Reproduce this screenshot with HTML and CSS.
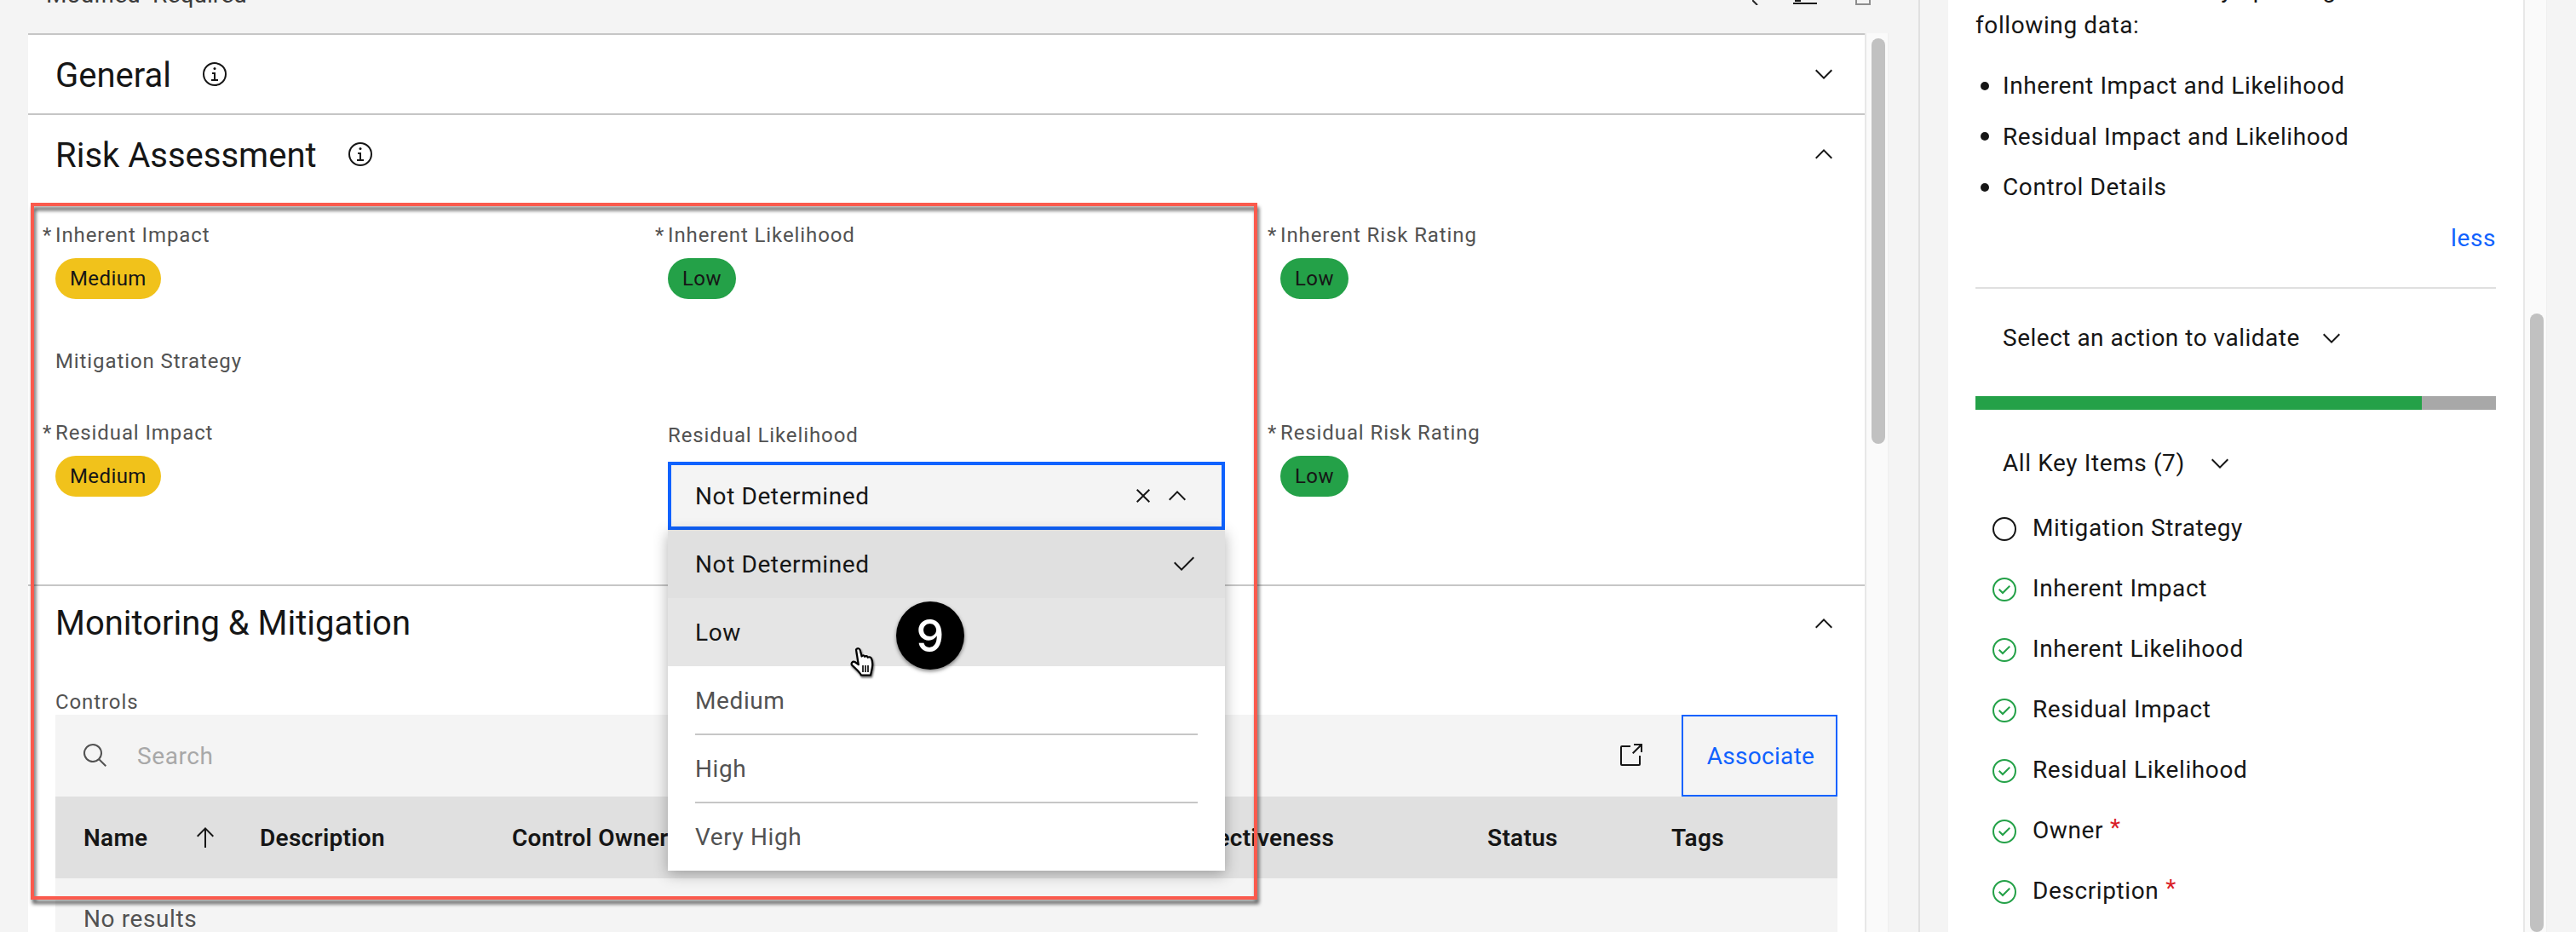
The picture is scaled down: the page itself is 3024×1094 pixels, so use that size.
FILE: index.html
```html
<!DOCTYPE html>
<html lang="en">
<head>
  <meta charset="UTF-8" />
  <title>Risk Assessment</title>
  <link rel="stylesheet" href="styles.css">
</head>
<body>
  <svg class="icon-defs" xmlns="http://www.w3.org/2000/svg">
    <symbol id="i-info" viewBox="0 0 32 32"><path d="M17 22V14H13V16H15V22H12V24H20V22Z"/><path d="M16 8a1.5 1.5 0 1 0 1.5 1.5A1.5 1.5 0 0 0 16 8Z"/><path d="M16 30A14 14 0 1 1 30 16 14 14 0 0 1 16 30ZM16 4A12 12 0 1 0 28 16 12 12 0 0 0 16 4Z"/></symbol>
    <symbol id="i-down" viewBox="0 0 32 32"><path d="M16 22L6 12 7.4 10.6 16 19.2 24.6 10.6 26 12z"/></symbol>
    <symbol id="i-up" viewBox="0 0 32 32"><path d="M16 10L26 20 24.6 21.4 16 12.8 7.4 21.4 6 20z"/></symbol>
    <symbol id="i-close" viewBox="0 0 32 32"><path d="M24 9.4L22.6 8 16 14.6 9.4 8 8 9.4 14.6 16 8 22.6 9.4 24 16 17.4 22.6 24 24 22.6 17.4 16 24 9.4z"/></symbol>
    <symbol id="i-check" viewBox="0 0 32 32"><path d="M13 24L4 15 5.414 13.586 13 21.171 26.586 7.586 28 9 13 24z"/></symbol>
    <symbol id="i-search" viewBox="0 0 32 32"><path d="M29 27.586l-7.552-7.552a11.018 11.018 0 1 0-1.414 1.414L27.586 29ZM4 13a9 9 0 1 1 9 9A9.01 9.01 0 0 1 4 13Z"/></symbol>
    <symbol id="i-launch" viewBox="0 0 32 32"><path d="M26 28H6a2 2 0 0 1-2-2V6A2 2 0 0 1 6 4H16V6H6V26H26V16h2V26A2 2 0 0 1 26 28Z"/><path d="M20 2V4H26.586L18 12.586 19.414 14 28 5.414V12H30V2Z"/></symbol>
    <symbol id="i-arrow" viewBox="0 0 32 32"><path d="M16 4L6 14 7.41 15.41 15 7.83V28H17V7.83L24.59 15.41 26 14 16 4z"/></symbol>
    <symbol id="i-ok" viewBox="0 0 32 32"><path d="M14 21.414L9 16.413 10.413 15 14 18.586 21.585 11 23 12.415Z"/><path d="M16 2A14 14 0 1 0 30 16 14 14 0 0 0 16 2Zm0 26A12 12 0 1 1 28 16 12 12 0 0 1 16 28Z"/></symbol>
    <symbol id="i-todo" viewBox="0 0 32 32"><path d="M16 2A14 14 0 1 0 30 16 14 14 0 0 0 16 2Zm0 26A12 12 0 1 1 28 16 12 12 0 0 1 16 28Z"/></symbol>
  </svg>

  <div class="main">
    <div class="top-bar">
      <span class="legend">Modified &nbsp;Required</span>
      <svg class="top-icon tail" viewBox="0 0 8 6"><path d="M0 0L6 6" /></svg>
      <svg class="top-icon base" viewBox="0 0 28 6"><path d="M2 1H9M0 4H28" /></svg>
      <svg class="top-icon box" viewBox="0 0 18 6"><path d="M1 0V5H17V0" /></svg>
    </div>

    <div class="work">
      <div class="panel">
        <section class="section">
          <div class="section-head">
            <h2 class="section-title">General</h2>
            <svg class="icon info"><use href="#i-info"/></svg>
            <svg class="icon toggle"><use href="#i-down"/></svg>
          </div>
        </section>

        <section class="section">
          <div class="section-head">
            <h2 class="section-title">Risk Assessment</h2>
            <svg class="icon info"><use href="#i-info"/></svg>
            <svg class="icon toggle"><use href="#i-up"/></svg>
          </div>
          <div class="fields">
            <div class="field">
              <label class="field-label req">Inherent Impact</label>
              <span class="pill pill-medium">Medium</span>
            </div>
            <div class="field">
              <label class="field-label req">Inherent Likelihood</label>
              <span class="pill pill-low">Low</span>
            </div>
            <div class="field">
              <label class="field-label req">Inherent Risk Rating</label>
              <span class="pill pill-low">Low</span>
            </div>

            <div class="field field-wide">
              <label class="field-label">Mitigation Strategy</label>
            </div>

            <div class="field">
              <label class="field-label req">Residual Impact</label>
              <span class="pill pill-medium">Medium</span>
            </div>
            <div class="field field-select">
              <label class="field-label">Residual Likelihood</label>
              <div class="select">
                <div class="select-box">
                  <span class="select-value">Not Determined</span>
                  <svg class="icon"><use href="#i-close"/></svg>
                  <svg class="icon"><use href="#i-up"/></svg>
                </div>
                <ul class="menu">
                  <li class="menu-item selected">Not Determined <svg class="icon"><use href="#i-check"/></svg></li>
                  <li class="menu-item hovered">Low</li>
                  <li class="menu-item">Medium</li>
                  <li class="menu-item">High</li>
                  <li class="menu-item">Very High</li>
                </ul>
              </div>
            </div>
            <div class="field">
              <label class="field-label req">Residual Risk Rating</label>
              <span class="pill pill-low">Low</span>
            </div>
          </div>
        </section>

        <section class="section">
          <div class="section-head section-head-short">
            <h2 class="section-title">Monitoring &amp; Mitigation</h2>
            <svg class="icon toggle"><use href="#i-up"/></svg>
          </div>
          <div class="controls">
            <div class="controls-label">Controls</div>
            <div class="table-tools">
              <svg class="icon search-icon"><use href="#i-search"/></svg>
              <span class="search-text">Search</span>
              <svg class="icon launch-icon"><use href="#i-launch"/></svg>
              <button class="btn-associate">Associate</button>
            </div>
            <div class="table-head">
              <div class="th th-name">Name <svg class="icon"><use href="#i-arrow"/></svg></div>
              <div class="th">Description</div>
              <div class="th">Control Owner</div>
              <div class="th">Control Effectiveness</div>
              <div class="th">Status</div>
              <div class="th">Tags</div>
            </div>
            <div class="table-empty">No results</div>
          </div>
        </section>
      </div>
      <div class="scroll"><div class="thumb thumb-main"></div></div>
    </div>
  </div>

  <div class="side">
    <div class="side-card">
      <p class="side-text">The risk is assessed by updating the<br>following data:</p>
      <ul class="bullets">
        <li>Inherent Impact and Likelihood</li>
        <li>Residual Impact and Likelihood</li>
        <li>Control Details</li>
      </ul>
      <a class="less">less</a>
      <hr class="side-rule">
      <div class="picker picker-action">Select an action to validate <svg class="icon"><use href="#i-down"/></svg></div>
      <div class="progress"><div class="progress-done" style="width: 85.8%"></div></div>
      <div class="picker picker-items">All Key Items (7) <svg class="icon"><use href="#i-down"/></svg></div>
      <ul class="checklist">
        <li><svg class="icon"><use href="#i-todo"/></svg>Mitigation Strategy</li>
        <li><svg class="icon done"><use href="#i-ok"/></svg>Inherent Impact</li>
        <li><svg class="icon done"><use href="#i-ok"/></svg>Inherent Likelihood</li>
        <li><svg class="icon done"><use href="#i-ok"/></svg>Residual Impact</li>
        <li><svg class="icon done"><use href="#i-ok"/></svg>Residual Likelihood</li>
        <li><svg class="icon done"><use href="#i-ok"/></svg>Owner <span class="star">*</span></li>
        <li><svg class="icon done"><use href="#i-ok"/></svg>Description <span class="star">*</span></li>
      </ul>
    </div>
    <div class="scroll scroll-side"><div class="thumb thumb-side"></div></div>
  </div>

  <!-- annotation layer -->
  <div class="callout"></div>
  <div class="step-badge">9</div>
  <svg class="hand" viewBox="0 0 30 34">
    <path d="M7 2.5C8.5.5 11 1 11.6 3L13.6 10.5C14.6 8.8 16.6 9 17.2 10.8 18.2 9.6 20.2 10 20.7 11.8 21.8 10.8 24.2 11.2 25 13 26.2 16 26.6 20.5 25.6 25L24 32.5H13C11 28.5 6 24.5 2 20.5.8 18.5 3 15.5 5.5 17L9.8 20.2Z" fill="#fff" stroke="#000" stroke-width="2.2" stroke-linejoin="round"/>
    <path d="M15 21V29M18 21V29M21 21V29" stroke="#000" stroke-width="1.6"/>
  </svg>
</body>
</html>
```

FILE: styles.css
```css
* { box-sizing: border-box; }

body {
  margin: 0;
  width: 3024px;
  height: 1094px;
  overflow: hidden;
  display: flex;
  background: #f4f4f4;
  color: #161616;
  font-family: Roboto, "Noto Sans", sans-serif;
  font-size: 28px;
  letter-spacing: .6px;
}

.icon-defs { width: 0; height: 0; position: absolute; }
.icon { width: 32px; height: 32px; flex: none; fill: #161616; }

/* main column */
.main { width: 2254px; height: 1094px; padding-left: 33px; border-right: 2px solid #e0e0e0; }

.top-bar { height: 39px; display: flex; align-items: flex-start; padding-left: 21px; }
.legend { margin-top: -24px; line-height: 36px; letter-spacing: .1px; color: #393939; }
.top-icon { height: 6px; fill: none; }
.tail { width: 8px; margin-left: auto; stroke: #262626; stroke-width: 2; }
.base { width: 28px; margin-left: 40px; stroke: #161616; stroke-width: 2; }
.box { width: 18px; margin: 0 56px 0 45px; stroke: #8d8d8d; stroke-width: 2; }

.work { display: flex; height: 1055px; }
.panel { width: 2156px; background: #fff; }

.section { border-top: 2px solid #c6c6c6; }
.section-head { height: 92px; display: flex; align-items: center; padding: 0 32px; }
.section-head-short { height: 88px; }
.section-title { margin: 0; padding-top: 3px; font-size: 40px; font-weight: 400; letter-spacing: 0; line-height: 50px; }
.section-head-short .section-title { padding-top: 0; }
.info { margin-left: 35px; }
.toggle { margin-left: auto; }

/* risk fields */
.fields {
  display: grid;
  grid-template-columns: 719px 719px 1fr;
  grid-template-rows: 148px 84px 194px;
  padding: 33px 0 0 32px;
}
.field { display: flex; flex-direction: column; align-items: flex-start; gap: 11px; }
.field-wide { grid-column: 1 / -1; }
.field-select { padding-top: 3px; gap: 15px; }
.field-label { font-size: 24px; line-height: 32px; letter-spacing: .9px; color: #525252; }
.req::before { content: "*"; display: inline-block; width: 15px; margin-left: -15px; letter-spacing: 0; }

.pill { height: 48px; padding: 0 17px; border-radius: 24px; display: flex; align-items: center; font-size: 24px; letter-spacing: .4px; }
.pill-medium { background: #f1c21b; }
.pill-low { background: #24a148; }

/* dropdown */
.select { position: relative; width: 654px; }
.select-box {
  height: 80px;
  display: flex;
  align-items: center;
  gap: 8px;
  padding: 0 36px 0 28px;
  border: 4px solid #0f62fe;
  background: #f4f4f4;
}
.select-value { margin-right: auto; }
.menu {
  position: absolute;
  top: 100%;
  left: 0;
  right: 0;
  z-index: 2;
  margin: 0;
  padding: 0;
  list-style: none;
  background: #fff;
  box-shadow: 0 4px 16px rgba(0, 0, 0, .3);
}
.menu-item { position: relative; height: 80px; display: flex; align-items: center; justify-content: space-between; padding: 0 32px; color: #525252; }
.menu-item + .menu-item + .menu-item + .menu-item::before {
  content: "";
  position: absolute;
  top: -1px;
  left: 32px;
  right: 32px;
  height: 2px;
  background: #c6c6c6;
}
.selected { background: #e0e0e0; color: #161616; }
.hovered { background: #e5e5e5; color: #161616; }

/* controls table */
.controls { padding: 0 32px; }
.controls-label { margin-top: 33px; font-size: 24px; line-height: 30px; letter-spacing: .9px; color: #525252; }
.table-tools { height: 96px; display: flex; align-items: center; background: #f4f4f4; }
.search-icon { margin-left: 31px; fill: #525252; }
.search-text { margin-left: 33px; color: #a8a8a8; }
.launch-icon { margin-left: auto; margin-right: 44px; }
.btn-associate {
  width: 183px;
  height: 96px;
  padding: 0 0 0 3px;
  border: 2px solid #0f62fe;
  background: #f4f4f4;
  color: #0f62fe;
  font: inherit;
  letter-spacing: .3px;
}
.table-head {
  height: 96px;
  display: grid;
  grid-template-columns: 240px 296px 690px 455px 216px 1fr;
  align-items: center;
  background: #e0e0e0;
  font-weight: 600;
  letter-spacing: .3px;
}
.th { white-space: nowrap; }
.th-name { display: flex; align-items: center; justify-content: space-between; padding: 0 48px 0 33px; }
.table-empty { height: 63px; padding: 32px 33px 0; line-height: 32px; background: #f4f4f4; color: #525252; overflow: hidden; }

/* scrollbars */
.scroll { width: 28px; flex: none; background: #fafafa; border-left: 2px solid #e8e8e8; border-right: 1px solid #efefef; overflow: hidden; }
.thumb { width: 16px; margin-left: 6px; border-radius: 8px; background: #c1c1c1; }
.thumb-main { height: 476px; margin-top: 6px; }
.thumb-side { height: 726px; margin-top: 368px; }

/* side column */
.side { flex: 1; height: 1094px; display: flex; padding-left: 33px; }
.side-card { width: 675px; padding: 0 32px; background: #fff; }
.side-text { margin: -33px 0 0; line-height: 42px; }

.bullets { margin: 20px 0 0; padding: 0; list-style: none; }
.bullets li { height: 59.5px; display: flex; align-items: center; }
.bullets li::before { content: ""; width: 10px; height: 10px; margin: 0 16px 0 6px; border-radius: 50%; background: #161616; }

.less { display: block; margin-top: 14px; line-height: 32px; text-align: right; color: #0f62fe; }
.side-rule { height: 2px; margin: 41px 0 0; border: 0; background: #e0e0e0; }

.picker { display: flex; align-items: center; height: 32px; padding-left: 32px; gap: 25px; }
.picker-action { margin-top: 42px; gap: 21px; letter-spacing: .5px; }
.picker-items { margin-top: 47px; }

.progress { height: 16px; margin-top: 52px; background: #a8a8a8; }
.progress-done { height: 100%; background: #24a148; }

.checklist { margin: 24px 0 0; padding: 0; list-style: none; }
.checklist li { height: 71px; display: flex; align-items: center; padding-left: 18px; }
.checklist .icon { margin-right: 17px; position: relative; top: 2px; }
.done { fill: #24a148; }
.star { margin-left: 8px; color: #da1e28; align-self: flex-start; padding-top: 16px; }

/* annotation overlays */
.callout {
  position: absolute;
  left: 36px;
  top: 238px;
  width: 1440px;
  height: 818px;
  border: 4px solid #fa5a4d;
  filter: drop-shadow(2px 5px 2px rgba(0, 0, 0, .65));
  z-index: 3;
}
.step-badge {
  position: absolute;
  left: 1052px;
  top: 706px;
  width: 80px;
  height: 80px;
  border-radius: 50%;
  display: flex;
  align-items: center;
  justify-content: center;
  background: #000;
  color: #fff;
  font-family: Inter, "Liberation Sans", sans-serif;
  font-size: 52px;
  font-weight: 500;
  letter-spacing: 0;
  box-shadow: 0 2px 4px rgba(0, 0, 0, .5);
  z-index: 4;
}
.hand {
  position: absolute;
  left: 998px;
  top: 760px;
  width: 30px;
  height: 34px;
  filter: drop-shadow(1px 2px 1px rgba(0, 0, 0, .6));
  z-index: 4;
}
```
